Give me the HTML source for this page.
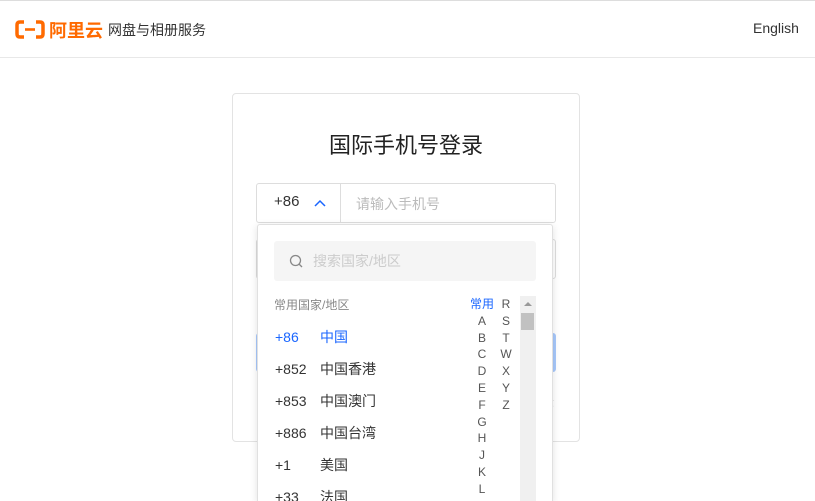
<!DOCTYPE html>
<html style="width:815px;height:501px;overflow:hidden"><head><meta charset="utf-8"><style>
*{margin:0;padding:0;box-sizing:border-box}
body{width:815px;height:501px;overflow:hidden;background:#fff;font-family:"Liberation Sans","Noto Sans CJK SC",sans-serif;position:relative;color:#333}
.a{position:absolute}
</style></head><body>
<div class="a" style="left:0;top:0;width:815px;height:1px;background:#ddd"></div>
<div class="a" style="left:0;top:57px;width:815px;height:1px;background:#e8e8e8"></div>
<svg class="a" style="left:15px;top:20px" width="30" height="19" viewBox="0 0 30 19"><path d="M9 2H5Q2 2 2 5V14Q2 17 5 17H9M21 2H25Q28 2 28 5V14Q28 17 25 17H21" fill="none" stroke="#ff6a00" stroke-width="3.5"/><rect x="10" y="8.2" width="10" height="2.6" fill="#ff6a00"/></svg>
<div class="a" style="left:49px;top:17px;font-size:18px;font-weight:bold;color:#ff6a00">阿里云</div>
<div class="a" style="left:108px;top:20px;font-size:14px;color:#333">网盘与相册服务</div>
<div class="a" style="left:753px;top:20px;font-size:14px;color:#333">English</div>

<div class="a" style="left:232px;top:93px;width:348px;height:349px;border:1px solid #e3e3e3;border-radius:4px;background:#fff"></div>
<div class="a" style="left:232px;top:128px;width:348px;text-align:center;font-size:22px;color:#222">国际手机号登录</div>
<div class="a" style="left:256px;top:183px;width:300px;height:40px;border:1px solid #ddd;border-radius:3px"></div>
<div class="a" style="left:340px;top:184px;width:1px;height:38px;background:#ddd"></div>
<div class="a" style="left:274px;top:193px;font-size:15px;color:#333">+86</div>
<svg class="a" style="left:313px;top:198px" width="14" height="10"><path d="M2 8L7 3L12 8" fill="none" stroke="#1a66ff" stroke-width="1.5"/></svg>
<div class="a" style="left:356px;top:194px;font-size:14px;color:#bbb">请输入手机号</div>
<div class="a" style="left:256px;top:239px;width:300px;height:40px;border:1px solid #ddd;border-radius:3px"></div>
<div class="a" style="left:256px;top:333px;width:300px;height:39px;background:#a8c8fb;border-radius:3px"></div>
<div class="a" style="left:541px;top:391px;font-size:13px;color:#999">录</div>

<div class="a" style="left:257px;top:224px;width:296px;height:277px;background:#fff;border:1px solid #e0e0e0;border-bottom:none;border-radius:3px 3px 0 0;box-shadow:0 2px 8px rgba(0,0,0,.12)"></div>
<div class="a" style="left:274px;top:241px;width:262px;height:40px;background:#f5f5f5;border-radius:3px"></div>
<svg class="a" style="left:289px;top:254px" width="15" height="15"><circle cx="6.5" cy="6.5" r="5" fill="none" stroke="#888" stroke-width="1.3"/><path d="M10 10L13 13" stroke="#888" stroke-width="1.3"/></svg>
<div class="a" style="left:313px;top:251px;font-size:14px;color:#ccc">搜索国家/地区</div>
<div class="a" style="left:274px;top:296px;font-size:12px;color:#888">常用国家/地区</div>
<div class="a" style="left:520px;top:296px;width:16px;height:205px;background:#f0f0f0"></div>
<svg class="a" style="left:522px;top:300px" width="12" height="8"><path d="M2 6L6 2L10 6Z" fill="#999"/></svg>
<div class="a" style="left:521px;top:313px;width:13px;height:17px;background:#c1c1c1"></div>
<div class="a" style="left:470px;top:296px;font-size:12px;line-height:16.8px;color:#555;text-align:center;width:24px"><span style="color:#1a66ff">常用</span><br>A<br>B<br>C<br>D<br>E<br>F<br>G<br>H<br>J<br>K<br>L</div>
<div class="a" style="left:498px;top:296px;font-size:12px;line-height:16.8px;color:#555;text-align:center;width:16px">R<br>S<br>T<br>W<br>X<br>Y<br>Z</div>
<div class="a" style="left:275px;top:321px;font-size:14px;line-height:32px;color:#333">
<div style="color:#1a66ff"><span style="display:inline-block;width:45px">+86</span>中国</div>
<div><span style="display:inline-block;width:45px">+852</span>中国香港</div>
<div><span style="display:inline-block;width:45px">+853</span>中国澳门</div>
<div><span style="display:inline-block;width:45px">+886</span>中国台湾</div>
<div><span style="display:inline-block;width:45px">+1</span>美国</div>
<div><span style="display:inline-block;width:45px">+33</span>法国</div>
</div>
</body></html>
